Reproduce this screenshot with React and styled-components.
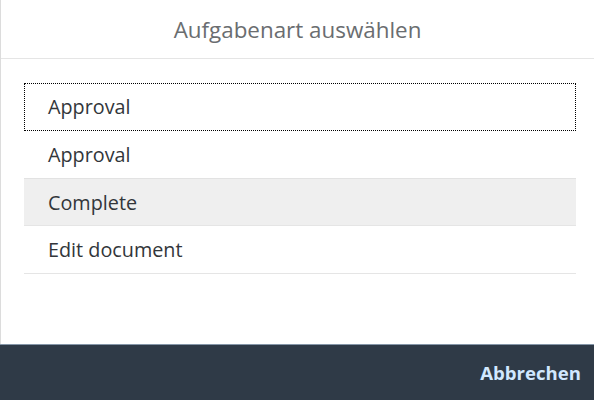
import React from "react";
import styled, { createGlobalStyle } from "styled-components";

const Global = createGlobalStyle`
  html, body { margin: 0; padding: 0; background: #ffffff; }
  body { font-family: "Open Sans", "Liberation Sans", Arial, sans-serif; }
  #root { width: 594px; height: 400px; }
`;

const Dialog = styled.div`
  width: 594px;
  height: 400px;
  box-sizing: border-box;
  border-left: 1px solid #dcdcdc;
  display: flex;
  flex-direction: column;
  background: #fff;
`;

const Header = styled.header`
  height: 58px;
  border-bottom: 1px solid #e5e5e5;
  display: flex;
  align-items: center;
  justify-content: center;
  flex-shrink: 0;
`;

const Title = styled.h1`
  margin: 0;
  font-weight: 400;
  font-size: 22.4px;
  color: #6a6d70;
`;

const Content = styled.div`
  flex: 1;
  padding: 24px 18px 0 23px;
`;

const List = styled.ul`
  list-style: none;
  margin: 0;
  padding: 0;
`;

const Item = styled.li`
  height: 48px;
  box-sizing: border-box;
  display: flex;
  align-items: center;
  padding-left: 24px;
  font-size: 19.8px;
  color: #32363a;
  border-bottom: 1px solid #e5e5e5;
  background: ${(p) => (p.$hover ? "#efefef" : "#fff")};
  ${(p) => p.$hover && "border-top: 1px solid #e2e2e2; margin-top: -1px;"}
  ${(p) =>
    p.$focused &&
    `border-bottom-color: transparent; outline: 1px dotted #000; outline-offset: -1px;`}
`;

const Footer = styled.footer`
  height: 56px;
  flex-shrink: 0;
  box-sizing: border-box;
  background: #2f3a47;
  border-top: 1px solid #8596a8;
  display: flex;
  align-items: center;
  justify-content: flex-end;
  padding-right: 13px;
  margin-left: -1px;
`;

const CancelButton = styled.button`
  background: transparent;
  border: none;
  padding: 0;
  font-family: "Open Sans", "Liberation Sans", Arial, sans-serif;
  font-weight: 700;
  font-size: 18.6px;
  color: #d1e8ff;
  cursor: pointer;
`;

export default function App() {
  const items = [
    { label: "Approval", focused: true },
    { label: "Approval" },
    { label: "Complete", hover: true },
    { label: "Edit document" },
  ];
  return (
    <>
      <Global />
      <Dialog>
        <Header>
          <Title>Aufgabenart auswählen</Title>
        </Header>
        <Content>
          <List>
            {items.map((it, i) => (
              <Item key={i} $focused={it.focused} $hover={it.hover}>
                {it.label}
              </Item>
            ))}
          </List>
        </Content>
        <Footer>
          <CancelButton>Abbrechen</CancelButton>
        </Footer>
      </Dialog>
    </>
  );
}
